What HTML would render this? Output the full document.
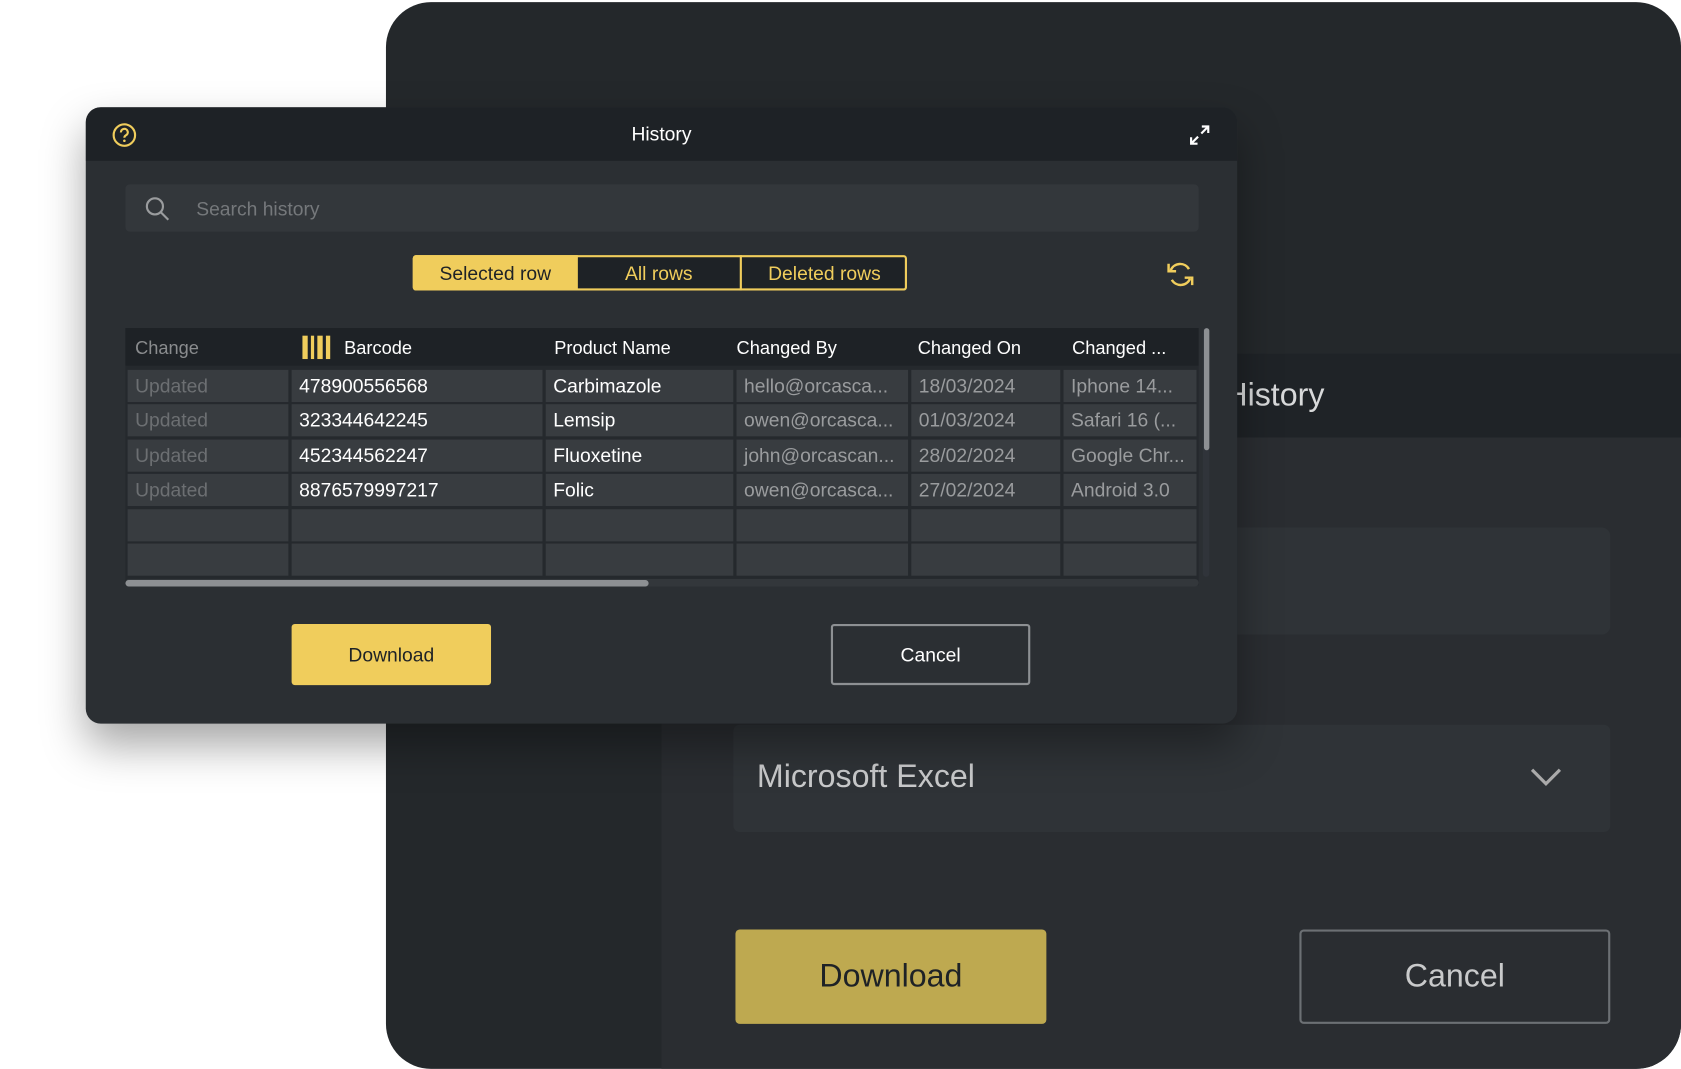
<!DOCTYPE html>
<html><head><meta charset="utf-8"><style>
*{margin:0;padding:0;box-sizing:border-box}
html,body{width:1681px;height:1069px;overflow:hidden;background:#fff;font-family:"Liberation Sans",sans-serif}
#s{position:absolute;left:0;top:0;width:1568px;height:997px;transform:scale(1.0721);transform-origin:0 0}
.a{position:absolute}
.back{left:360px;top:2px;width:1208px;height:995px;border-radius:42px;background:#24282b;overflow:hidden}
.dlg{left:80px;top:100px;width:1074px;height:575px;border-radius:14px;background:#2b2f33;overflow:hidden;box-shadow:0 20px 40px rgba(0,0,0,.35)}
.cell{position:absolute;background:#383c40;font-size:18px;line-height:29px;padding-left:7px;white-space:nowrap;overflow:hidden;color:#fff}
.hd{position:absolute;top:214px;font-size:17px;color:#fff;line-height:20px}
</style></head><body><div id="s">
<div class="a back">
 <div class="a" style="left:257px;top:406px;width:951px;height:589px;background:#2a2d31"></div>
 <div class="a" style="left:0;top:328px;width:1208px;height:78px;background:#1f2327"></div>
 <div class="a" style="left:782px;top:350px;font-size:30px;color:#d8d9da">History</div>
 <div class="a" style="left:324px;top:490px;width:818px;height:100px;border-radius:8px;background:#2f3337"></div>
 <div class="a" style="left:324px;top:674px;width:818px;height:100px;border-radius:6px;background:#2f3337"></div>
 <div class="a" style="left:346px;top:706px;font-size:30px;color:#c9cacb">Microsoft Excel</div>
 <svg class="a" style="left:1066px;top:712px" width="32" height="20"><path d="M3 4 L16 17 L29 4" fill="none" stroke="#aaa" stroke-width="3"/></svg>
 <div class="a" style="left:326px;top:865px;width:290px;height:88px;border-radius:4px;background:#bea950;color:#1e2226;font-size:30px;text-align:center;line-height:88px">Download</div>
 <div class="a" style="left:852px;top:865px;width:290px;height:88px;border-radius:4px;border:2px solid #6c7074;color:#c9cacb;font-size:30px;text-align:center;line-height:84px">Cancel</div>
</div>
<div class="a dlg">
 <div class="a" style="left:0;top:0;width:1074px;height:50px;background:#1e2226"></div>
 <svg class="a" style="left:24px;top:14px" width="24" height="24"><circle cx="12" cy="12" r="10" fill="none" stroke="#f0cd5c" stroke-width="2"/><path d="M8.8 9.5a3.2 3.2 0 1 1 4.5 2.8c-.9.5-1.3 1-1.3 2.2" fill="none" stroke="#f0cd5c" stroke-width="2"/><circle cx="12" cy="17.3" r="1.2" fill="#f0cd5c"/></svg>
 <div class="a" style="left:0;width:1074px;top:15px;text-align:center;font-size:18px;color:#fff">History</div>
 <svg class="a" style="left:1028px;top:15px" width="22" height="22"><path d="M13 3h6v6M19 3l-6.5 6.5M9 19H3v-6M3 19l6.5-6.5" fill="none" stroke="#fff" stroke-width="2"/></svg>
 <div class="a" style="left:37px;top:72px;width:1001px;height:44px;border-radius:4px;background:#33373b"></div>
 <svg class="a" style="left:54px;top:82px" width="26" height="26"><circle cx="10.5" cy="10.5" r="7.5" fill="none" stroke="#9a9c9e" stroke-width="2"/><path d="M16 16l7 7" stroke="#9a9c9e" stroke-width="2"/></svg>
 <div class="a" style="left:103px;top:85px;font-size:18px;color:#75787b">Search history</div>
 <div class="a" style="left:305px;top:138px;width:461px;height:33px;border:2px solid #f0cd5c;border-radius:3px;background:#1e2226"></div>
 <div class="a" style="left:305px;top:138px;width:154px;height:33px;background:#f0cd5c;border-radius:3px 0 0 3px;color:#1e2226;font-size:18px;text-align:center;line-height:34px">Selected row</div>
 <div class="a" style="left:610px;top:138px;width:2px;height:33px;background:#f0cd5c"></div>
 <div class="a" style="left:459px;top:138px;width:151px;text-align:center;line-height:34px;font-size:18px;color:#f0cd5c">All rows</div>
 <div class="a" style="left:612px;top:138px;width:154px;text-align:center;line-height:34px;font-size:18px;color:#f0cd5c">Deleted rows</div>
 <svg class="a" style="left:1007px;top:142px" width="28" height="28"><path d="M22 9A9.5 9.5 0 0 0 5 10M6 19a9.5 9.5 0 0 0 17-1" fill="none" stroke="#f0cd5c" stroke-width="2.3"/><path d="M3 4v7h7" fill="none" stroke="#f0cd5c" stroke-width="2.3"/><path d="M25 24v-7h-7" fill="none" stroke="#f0cd5c" stroke-width="2.3"/></svg>
 <div class="a" style="left:37px;top:206px;width:1001px;height:240px;background:#25292d"></div>
 <div class="a" style="left:37px;top:206px;width:1001px;height:35px;background:#1e2226"></div>
 <div class="hd" style="left:46px;color:#8a8c8e;top:215px">Change</div>
 <svg class="a" style="left:202px;top:213px" width="30" height="22"><rect x="0" y="0" width="5" height="22" fill="#f0cd5c"/><rect x="8" y="0" width="3" height="22" fill="#f0cd5c"/><rect x="14" y="0" width="5" height="22" fill="#f0cd5c"/><rect x="22" y="0" width="4" height="22" fill="#f0cd5c"/></svg>
 <div class="hd" style="left:241px;top:215px">Barcode</div>
 <div class="hd" style="left:437px;top:215px">Product Name</div>
 <div class="hd" style="left:607px;top:215px">Changed By</div>
 <div class="hd" style="left:776px;top:215px">Changed On</div>
 <div class="hd" style="left:920px;top:215px">Changed ...</div>
 <div id="rows"></div>
 <div class="a" style="left:37px;top:440px;width:1001px;height:7px;border-radius:4px;background:#33373b"></div>
 <div class="a" style="left:37px;top:441px;width:488px;height:6px;border-radius:3px;background:#8d9093"></div>
 <div class="a" style="left:1042px;top:206px;width:6px;height:232px;border-radius:3px;background:#30343a"></div>
 <div class="a" style="left:1043px;top:206px;width:5px;height:114px;border-radius:3px;background:#8d9093"></div>
 <div class="a" style="left:192px;top:482px;width:186px;height:57px;border-radius:3px;background:#f0cd5c;color:#1e2226;font-size:18px;text-align:center;line-height:59px">Download</div>
 <div class="a" style="left:695px;top:482px;width:186px;height:57px;border-radius:3px;border:2px solid #8d9093;color:#fff;font-size:18px;text-align:center;line-height:55px">Cancel</div>
</div>
</div>
<script>
var cols=[[39,150],[192,234],[429,175],[607,160],[770,139],[912,124]];
var tops=[245,277,310,342,375,407];
var d=[["Updated","478900556568","Carbimazole","hello@orcasca...","18/03/2024","Iphone 14..."],
["Updated","323344642245","Lemsip","owen@orcasca...","01/03/2024","Safari 16 (..."],
["Updated","452344562247","Fluoxetine","john@orcascan...","28/02/2024","Google Chr..."],
["Updated","8876579997217","Folic","owen@orcasca...","27/02/2024","Android 3.0"],
["","","","","",""],["","","","","",""]];
var h="";
for(var r=0;r<6;r++)for(var c=0;c<6;c++){
var col=(c==0)?"#6c6f72":(c>=3?"#9a9c9e":"#fff");
h+='<div class="cell" style="left:'+cols[c][0]+'px;top:'+tops[r]+'px;width:'+cols[c][1]+'px;height:30px;line-height:31px;color:'+col+'">'+d[r][c]+'</div>';}
document.getElementById("rows").outerHTML=h;
</script>
</body></html>
